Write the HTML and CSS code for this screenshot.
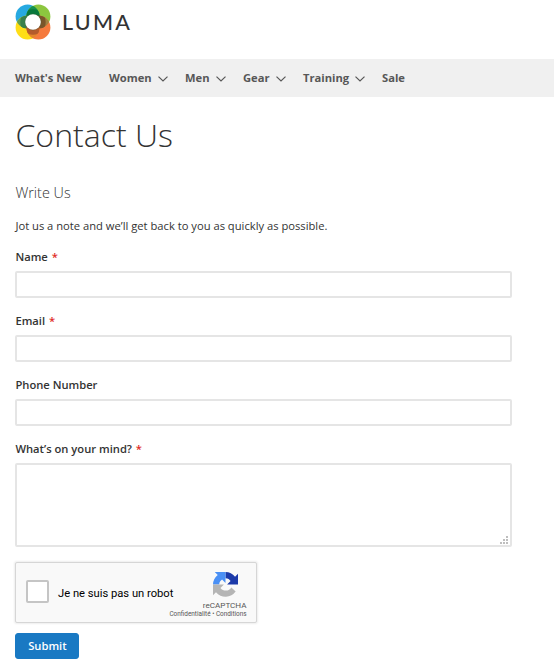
FILE: index.html
```html
<!DOCTYPE html>
<html lang="en">
<head>
<meta charset="utf-8">
<title>Contact Us</title>
<link rel="stylesheet" href="styles.css">
</head>
<body>
<header class="header">
  <svg class="rings" viewBox="0 0 36 36" aria-hidden="true">
    <defs>
      <clipPath id="tl"><circle cx="12.600" cy="12.600" r="12"/></clipPath>
      <clipPath id="tr"><circle cx="23.400" cy="12.600" r="12"/></clipPath>
      <clipPath id="bl"><circle cx="12.600" cy="23.400" r="12"/></clipPath>
      <clipPath id="ring"><circle cx="18" cy="18" r="12.700"/></clipPath>
    </defs>
    <circle cx="12.600" cy="12.600" r="12" fill="#27a9e1"/>
    <circle cx="23.400" cy="12.600" r="12" fill="#8cc63f"/>
    <circle cx="12.600" cy="23.400" r="12" fill="#ffde17"/>
    <circle cx="23.400" cy="23.400" r="12" fill="#f57a3d"/>
    <circle cx="23.400" cy="12.600" r="12" fill="#16914d" clip-path="url(#tl)"/>
    <circle cx="12.600" cy="23.400" r="12" fill="#62a04f" clip-path="url(#tl)"/>
    <circle cx="23.400" cy="23.400" r="12" fill="#a08040" clip-path="url(#tr)"/>
    <circle cx="23.400" cy="23.400" r="12" fill="#e5862b" clip-path="url(#bl)"/>
    <g clip-path="url(#ring)">
      <circle cx="23.400" cy="12.600" r="12" fill="#08783b" clip-path="url(#tl)"/>
      <circle cx="12.600" cy="23.400" r="12" fill="#38804a" clip-path="url(#tl)"/>
      <circle cx="23.400" cy="23.400" r="12" fill="#7a552a" clip-path="url(#tr)"/>
      <circle cx="23.400" cy="23.400" r="12" fill="#b55b2b" clip-path="url(#bl)"/>
    </g>
    <circle cx="18" cy="18" r="8.400" fill="#3d5a35" opacity=".4"/>
    <circle cx="18" cy="18" r="7.800" fill="#fff"/>
  </svg>
  <span class="brand">LUMA</span>
</header>
<nav class="nav">
  <a class="first">What's New</a>
  <a class="women">Women<svg viewBox="0 0 10 6"><path d="M.5.6 5 5 9.500.6"/></svg></a>
  <a class="men">Men<svg viewBox="0 0 10 6"><path d="M.5.6 5 5 9.500.6"/></svg></a>
  <a class="gear">Gear<svg viewBox="0 0 10 6"><path d="M.5.6 5 5 9.500.6"/></svg></a>
  <a class="training">Training<svg viewBox="0 0 10 6"><path d="M.5.6 5 5 9.500.6"/></svg></a>
  <a>Sale</a>
</nav>
<main class="main">
  <h1>Contact Us</h1>
  <form>
    <h2>Write Us</h2>
    <p class="note">Jot us a note and we’ll get back to you as quickly as possible.</p>
    <div class="field"><label for="name">Name <i>*</i></label><input id="name" type="text"></div>
    <div class="field"><label for="email">Email <i>*</i></label><input id="email" type="email"></div>
    <div class="field"><label for="phone">Phone Number</label><input id="phone" type="tel"></div>
    <div class="field area">
      <label for="comment">What’s on your mind? <i>*</i></label>
      <textarea id="comment"></textarea>
      <svg class="grip" viewBox="0 0 8 8"><path d="M6 0h2v2H6zM3 3h2v2H3zM6 3h2v2H6zM0 6h2v2H0zM3 6h2v2H3zM6 6h2v2H6z"/></svg>
    </div>
    <div class="captcha">
      <span class="box"></span>
      <span class="robot">Je ne suis pas un robot</span>
      <div class="badge">
        <svg viewBox="0 0 64 64" aria-hidden="true">
          <path fill="#1c3aa9" d="M64 32V4.500l-7.600 7.600A32 32 0 0 0 32 0v16c7 0 10 3 13 7.300L36 32z"/>
          <path fill="#4a90f5" d="M32 0H4.500l7.600 7.600A32 32 0 0 0 0 32h16c0-7 3-10 7.300-13L32 28z"/>
          <path fill="#b5b5b5" d="M0 32v27.500l7.600-7.600A32 32 0 0 0 58 50L47 39.500A17 17 0 0 1 19 41l9-9z"/>
        </svg>
        <span class="re">reCAPTCHA</span>
        <span class="terms">Confidentialité • Conditions</span>
      </div>
    </div>
    <button type="button">Submit</button>
  </form>
</main>
</body>
</html>
```
FILE: styles.css
```css
* { box-sizing: border-box; }
body {
  margin: 0;
  background: #fff;
  color: #333;
  font: 11.2px/16px "Open Sans", sans-serif;
}
.header {
  display: flex;
  height: 59px;
  padding: 4px 0 0 15px;
}
.rings { width: 36px; height: 36px; }
.brand {
  margin: 6px 0 0 11px;
  color: #333;
  font: 500 21.5px/24px Lato, sans-serif;
  letter-spacing: 2.3px;
}
.nav {
  display: flex;
  height: 38px;
  padding-left: 15px;
  align-items: center;
  background: #f0f0f0;
  color: #575757;
  font-weight: 700;
}
.nav a { display: flex; align-items: center; }
.nav svg {
  width: 10px;
  height: 6px;
  margin: 1px 0 0 6px;
  fill: none;
  stroke: #575757;
  stroke-width: 1.2;
}
.first { width: 94px; }
.women { width: 76px; }
.men { width: 58px; }
.gear { width: 60px; }
.training { width: 79px; }
.main { width: 512px; padding: 16px 0 0 15px; }
h1 {
  margin: 0;
  padding-left: .5px;
  font-size: 32px;
  font-weight: 300;
  line-height: 44px;
}
h2 {
  margin: 26px 0 0;
  padding-left: .4px;
  font-size: 14.4px;
  font-weight: 300;
  line-height: 20px;
}
.note { margin: 15px 0; padding-left: .4px; }
.field { height: 64px; }
label { display: block; padding-left: .4px; font-weight: 600; }
label i { margin-left: 1px; color: #e02b27; font-style: normal; }
input, textarea {
  display: block;
  width: 497px;
  height: 27px;
  margin: 6px 0 0;
  border: 2px solid #e5e5e5;
  border-radius: 2px;
  background: #fff;
}
textarea { height: 84px; resize: none; }
.area { position: relative; height: 121px; }
.grip {
  position: absolute;
  right: 4px;
  bottom: 18px;
  width: 8px;
  height: 8px;
  fill: #bebebe;
}
.captcha {
  display: flex;
  width: 242px;
  height: 61px;
  padding-left: 11px;
  border: 1px solid #d6d6d6;
  border-radius: 2px;
  background: #f9f9f9;
  box-shadow: 0 0 2px 1px #eeeeee;
  color: #000;
  font-family: Roboto, sans-serif;
}
.box {
  flex: none;
  width: 23px;
  height: 23px;
  margin-top: 17px;
  margin-left: -1px;
  border: 2px solid #c5c5c5;
  border-radius: 2px;
  background: #fff;
}
.robot { flex: none; width: 108px; margin: 23px 0 0 9px; white-space: nowrap; }
.badge {
  display: flex;
  flex: 1;
  flex-direction: column;
  align-items: flex-end;
  padding: 9px 9.5px 0 0;
  white-space: nowrap;
}
.badge svg { flex: none; width: 25px; height: 25px; margin-right: 8.500px; }
.re { margin-top: 3px; color: #555; font-size: 8.1px; line-height: 10px; }
.terms { color: #555; font-size: 6.4px; line-height: 8px; }
button {
  display: block;
  width: 64px;
  height: 26px;
  margin: 10px 0 0 .4px;
  padding: 0;
  border: 1px solid #1979c3;
  border-radius: 3px;
  background: #1979c3;
  color: #fff;
  font: 600 11.2px/16px "Open Sans", sans-serif;
}
```
